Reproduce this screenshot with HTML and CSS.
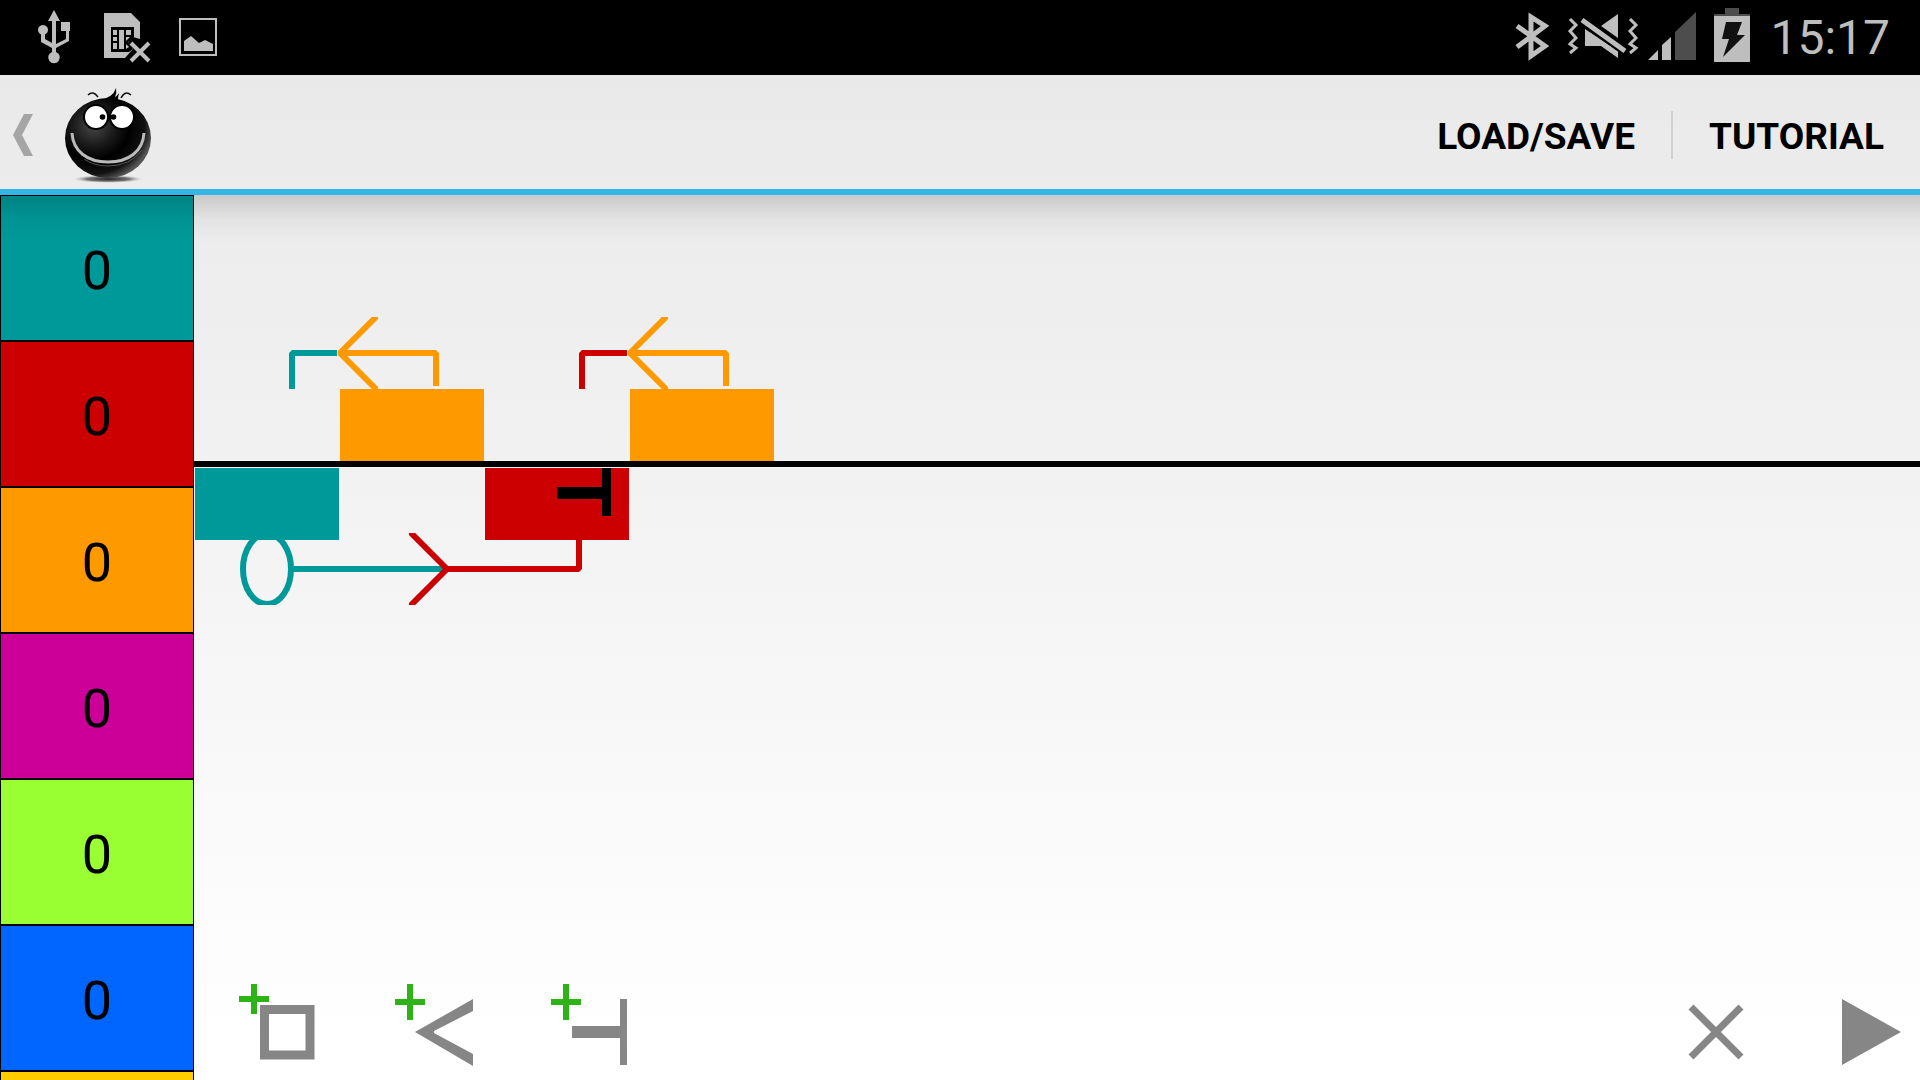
FILE: index.html
```html
<!DOCTYPE html>
<html lang="en">
<head>
<meta charset="utf-8">
<meta name="viewport" content="width=device-width, initial-scale=1">
<title>Program editor</title>
<link rel="stylesheet" href="styles.css">
</head>
<body>
<header class="status">
  <div class="status-group">
    <svg class="status-icon" width="72" height="75" viewBox="0 0 72 75" aria-label="USB connected">
      <path d="M36 10l6 11h-4v23l10-5v-8h-5v-9h9v9h-1v10l-13 7v4a5.800 5.800 0 1 1-4 0v-4L23 42V34.500a5 5 0 1 1 4 0V39l7 4V21h-4z"/>
    </svg>
    <svg class="status-icon" width="72" height="75" viewBox="0 0 72 75" aria-label="No SIM card">
      <path d="M14 13h27l9 9v17l-7-2-5 5 5 7-8 9H14z"/>
      <path d="M21 27h23v10l-6 5 5 7-4 3H21z" fill="#000"/>
      <path d="M23 30h4v5h-4zM29 30h5v19h-5zM36 30h5v5h-5zM23 37h4v4h-4zM23 43h4v6h-4zM36 37h4l-4 4zM36 44l3 3-3 2z"/>
      <path d="M41 43l18 18M59 43L41 61" class="line-icon" stroke-width="4"/>
    </svg>
    <svg class="status-icon" width="72" height="75" viewBox="0 0 72 75" aria-label="Screenshot saved">
      <path d="M18 19h36v36H18z" class="line-icon" stroke-width="2"/>
      <path d="M22 51V41l7-5 8 7 6-3 8 4v7z"/>
    </svg>
  </div>
  <div class="status-group">
    <svg class="status-icon" width="54" height="75" viewBox="0 0 54 75" aria-label="Bluetooth">
      <path d="M11 26l28 20-14 10V17l14 9-28 21" class="line-icon" stroke-width="5"/>
    </svg>
    <svg class="status-icon" width="84" height="75" viewBox="0 0 84 75" aria-label="Vibrate">
      <path d="M58 14v24L41 26zM25 29l33 22v7L41 46H25z"/>
      <path d="M22 20l43 31" stroke="#000" stroke-width="9"/>
      <path d="M22 20l43 31" class="line-icon" stroke-width="5"/>
      <path d="M10 19l6 6-6 6 6 7-6 6 6 4-6 5M70 19l6 6-6 6 6 7-6 6 6 4-6 5" class="line-icon" stroke-width="3"/>
    </svg>
    <svg class="status-icon" width="60" height="75" viewBox="0 0 60 75" aria-label="Signal">
      <path d="M4 60h10V50zM18 60h9V37l-9 8z"/>
      <path d="M31 60h21V12L31 32z" class="dim-icon"/>
    </svg>
    <svg class="status-icon" width="54" height="75" viewBox="0 0 54 75" aria-label="Charging">
      <path d="M21 8h14v6h11v3H10v-3h11z" class="dim-icon"/>
      <path d="M10 16h36v46H10z"/>
      <path d="M22 22h16l-5 13h8L19 57l6-18h-7z" fill="#111"/>
    </svg>
    <time class="clock">15:17</time>
  </div>
</header>

<nav class="actionbar">
  <button class="home" aria-label="Navigate up">
    <svg class="chevron" width="20" height="42" viewBox="0 0 20 42"><path d="M11 0h9L9 21l11 21h-9L0 21z"/></svg>
    <svg width="96" height="100" viewBox="0 0 96 100">
      <defs>
        <radialGradient id="ball" cx="0.330" cy="0.350" r="0.700">
          <stop offset="0" stop-color="#484848"/><stop offset="0.350" stop-color="#1a1a1a"/><stop offset="0.600" stop-color="#000"/><stop offset="0.850" stop-color="#111"/><stop offset="1" stop-color="#555"/>
        </radialGradient>
        <radialGradient id="ground"><stop offset="0" stop-color="#222"/><stop offset="0.600" stop-color="#777"/><stop offset="1" stop-color="#ddd" stop-opacity="0"/></radialGradient>
      </defs>
      <ellipse cx="48" cy="95" rx="36" ry="4" fill="url(#ground)"/>
      <ellipse cx="48" cy="54" rx="43" ry="40" fill="url(#ball)"/>
      <path d="M39 16q14-2 17-12 1 5-1 9 2-1 4-4-1 4-1 7z"/>
      <path d="M28 11q5-5 10 2M61 14q4-8 10-3" fill="none" stroke="#111" stroke-width="1.500"/>
      <circle cx="36" cy="33" r="12" fill="#fff" stroke="#000" stroke-width="2"/>
      <circle cx="62" cy="33" r="12" fill="#fff" stroke="#000" stroke-width="2"/>
      <circle cx="42.500" cy="33" r="2.800"/><circle cx="53.500" cy="33" r="2.800"/>
      <path d="M12 49c1 18 15 29 36 29s35-11 36-29" fill="none" stroke="#bbb" stroke-width="3"/>
      <path d="M24 75q10 7 24 7 22 0 34-16" fill="none" stroke="#555" stroke-width="1"/>
    </svg>
  </button>
  <div class="actions">
    <button class="action">LOAD/SAVE</button>
    <span class="divider"></span>
    <button class="action">TUTORIAL</button>
  </div>
</nav>

<main class="workspace">
  <aside class="palette">
    <button class="swatch teal">0</button>
    <button class="swatch red">0</button>
    <button class="swatch orange">0</button>
    <button class="swatch magenta">0</button>
    <button class="swatch lime">0</button>
    <button class="swatch blue">0</button>
    <button class="swatch yellow" aria-label="Yellow"></button>
  </aside>
  <section class="editor">
    <svg class="diagram" aria-label="Program strip">
      <defs>
        <clipPath id="above"><path d="M0 122h600v72H0z"/></clipPath>
        <clipPath id="below"><path d="M0 338h600v72H0z"/></clipPath>
      </defs>
      <g shape-rendering="crispEdges">
        <rect class="fill-orange" x="146" y="194" width="144" height="72"/>
        <rect class="fill-orange" x="436" y="194" width="144" height="72"/>
        <rect class="fill-teal" x="1" y="273" width="144" height="72"/>
        <rect class="fill-red" x="291" y="273" width="144" height="72"/>
        <rect class="axis" x="0" y="266" width="100%" height="6"/>
        <path d="M363 292h45v-19h9v48h-9v-17h-45z"/>
      </g>
      <g clip-path="url(#above)">
        <path class="wire teal-wire" d="M98 194v-36h45"/>
        <path class="wire orange-wire" d="M147 158h95v33"/>
        <path class="wire head orange-wire" d="M181 123l-35 35 35 35"/>
        <path class="wire red-wire" d="M388 194v-36h45"/>
        <path class="wire orange-wire" d="M437 158h95v33"/>
        <path class="wire head orange-wire" d="M471 123l-35 35 35 35"/>
      </g>
      <g clip-path="url(#below)">
        <path class="wire teal-wire" d="M97 374h154"/>
        <path class="wire red-wire" d="M252 374h133v-29"/>
        <path class="wire head red-wire" d="M218 339l35 35-35 35"/>
      </g>
      <svg x="0" y="345" width="200" height="65" viewBox="0 345 200 65">
        <ellipse class="wire teal-wire" cx="73" cy="374" rx="24" ry="35"/>
      </svg>
    </svg>
    <div class="toolbar">
      <div class="tools">
        <button class="tool" aria-label="Add block">
          <svg width="96" height="96" viewBox="0 0 96 96"><path class="plus" d="M15 0v30M0 15h30"/><path class="tool-line" stroke-width="9" d="M25.500 25.500h45.500v45.500h-45.500z"/></svg>
        </button>
        <button class="tool" aria-label="Add arrow">
          <svg width="96" height="96" viewBox="0 0 96 96"><path class="plus" d="M15 0v36M0 18h30"/><path class="tool-fill" d="M20 48l58-33v12L39 47v2l39 21v12z"/></svg>
        </button>
        <button class="tool" aria-label="Add stop">
          <svg width="96" height="96" viewBox="0 0 96 96"><path class="plus" d="M15 0v36M0 18h30"/><path class="tool-fill" d="M21 42h48V15h7v66h-7V54H21z"/></svg>
        </button>
      </div>
      <div class="tools">
        <button class="tool" aria-label="Clear">
          <svg width="96" height="96" viewBox="0 0 96 96"><path class="tool-line" stroke-width="7" d="M23 23l50 50M73 23L23 73"/></svg>
        </button>
        <button class="tool" aria-label="Run">
          <svg width="96" height="96" viewBox="0 0 96 96"><path class="tool-fill" d="M18 15l59 33-59 33z"/></svg>
        </button>
      </div>
    </div>
  </section>
</main>
</body>
</html>
```
FILE: styles.css
```css
* { box-sizing: border-box; }

body {
  margin: 0;
  height: 100vh;
  display: flex;
  flex-direction: column;
  overflow: hidden;
  font-family: Roboto, sans-serif;
  color: #000;
  background: linear-gradient(#e7e7e7, #fff 97%);
}

button {
  margin: 0;
  padding: 0;
  border: 0;
  background: none;
  font: inherit;
  color: inherit;
}

svg { display: block; flex: none; }

/* System status bar */
.status {
  flex: none;
  height: 75px;
  display: flex;
  justify-content: space-between;
  padding: 0 30px 0 18px;
  background: #000;
}
.status-group { display: flex; align-items: center; }
.status-icon { fill: #bebebe; }
.line-icon { fill: none; stroke: #bebebe; }
.dim-icon { fill: #4d4d4d; }
.clock {
  padding-left: 12px;
  font-size: 48px;
  line-height: 72px;
  font-weight: 400;
  color: #bebebe;
}

/* Action bar */
.actionbar {
  flex: none;
  height: 120px;
  display: flex;
  justify-content: space-between;
  border-bottom: 6px solid #33b5e5;
  background: linear-gradient(#e9e9e9, #ececec);
}
.home {
  display: flex;
  align-items: center;
  gap: 27px;
  padding: 4px 13px 0;
}
.chevron { fill: #a5a5a5; margin-top: 2px; }
.actions { display: flex; align-items: center; }
.action {
  align-self: stretch;
  padding: 10px 36px 0;
  font-size: 37px;
  line-height: 48px;
  font-weight: 700;
}
.divider { width: 2px; height: 48px; margin-top: 6px; background: #d0d0d0; }

/* Workspace */
.workspace {
  flex: 1;
  min-height: 0;
  display: flex;
  position: relative;
}
.workspace::before {
  content: "";
  position: absolute;
  inset: 0 0 auto;
  height: 48px;
  background: linear-gradient(rgba(0, 0, 0, 0.150), rgba(0, 0, 0, 0.040) 50%, rgba(0, 0, 0, 0));
  pointer-events: none;
  z-index: 1;
}
.palette {
  flex: none;
  width: 194px;
  display: flex;
  flex-direction: column;
  overflow: hidden;
}
.swatch {
  flex: none;
  height: 146px;
  padding-top: 6px;
  border: 1px solid #000;
  font-size: 54px;
  line-height: 64px;
}
.teal { background: #099; }
.red { background: #c00; }
.orange { background: #f90; }
.magenta { background: #c09; }
.lime { background: #9f3; }
.blue { background: #06f; }
.yellow { background: #fc0; }

.editor {
  flex: 1;
  min-width: 0;
  display: flex;
  flex-direction: column;
}
.diagram { flex: 1; width: 100%; min-height: 0; }
.fill-teal { fill: #099; }
.fill-red { fill: #c00; }
.fill-orange { fill: #f90; }
.wire { fill: none; stroke-width: 6; stroke-linejoin: bevel; }
.head { stroke-linecap: round; }
.teal-wire { stroke: #099; }
.red-wire { stroke: #c00; }
.orange-wire { stroke: #f90; }

.toolbar {
  flex: none;
  display: flex;
  justify-content: space-between;
  padding-left: 45px;
}
.tools { display: flex; gap: 60px; }
.plus { fill: none; stroke: #2db316; stroke-width: 6; }
.tool-line { fill: none; stroke: #868686; }
.tool-fill { fill: #868686; }
```
